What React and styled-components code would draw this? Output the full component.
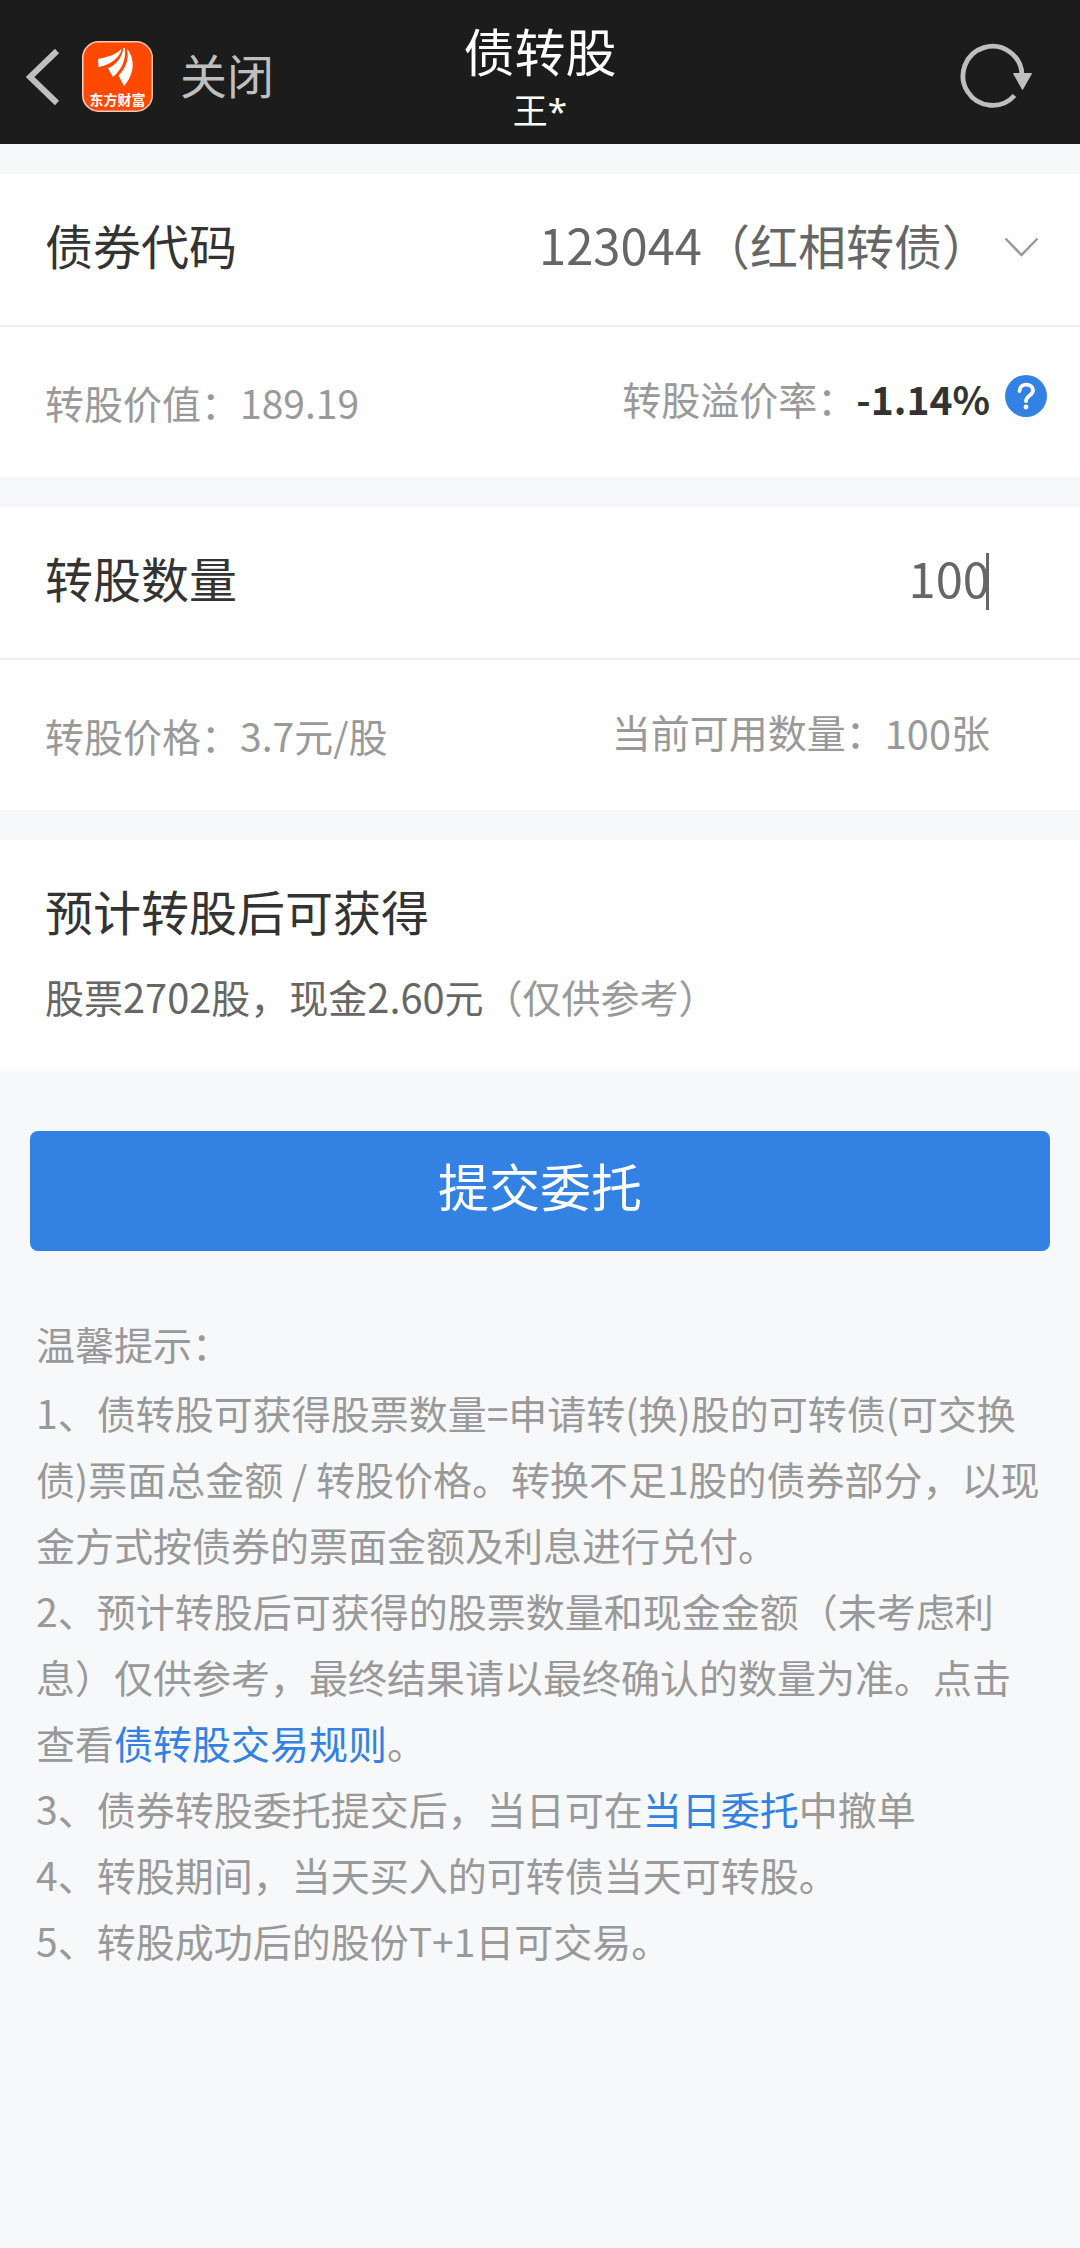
import React from 'react';
import styled, { createGlobalStyle } from 'styled-components';

const GlobalStyle = createGlobalStyle`
  * {
    box-sizing: border-box;
  }

  body {
    margin: 0;
    background: #f7f8fa;
    font-family: 'Noto Sans CJK SC', 'Noto Sans', sans-serif;
    color: #333;
  }
`;

const Page = styled.main`
  width: 1080px;
  min-height: 2248px;
  background: #f7f8fa;
`;

const Header = styled.header`
  display: grid;
  grid-template-columns: 1fr auto 1fr;
  height: 144px;
  padding: 0 48px;
  background: #1c1c1c;
  color: #bfbfbf;
`;

const HeaderLeft = styled.div`
  display: flex;
  align-items: center;
  margin-left: -22px;
  padding-top: 9px;
`;

const Logo = styled.svg`
  margin-left: 21px;
`;

const Close = styled.span`
  margin: -6px 0 0 27px;
  font-size: 47px;
  line-height: 60px;
`;

const HeaderTitle = styled.div`
  padding-top: 20px;
  text-align: center;
  color: #fff;
`;

const Title = styled.h1`
  margin: 0;
  font-size: 51px;
  font-weight: 400;
  line-height: 60px;
`;

const Account = styled.div`
  margin-top: 8px;
  font-family: 'Noto Sans', 'Noto Sans CJK SC', sans-serif;
  font-size: 35px;
  line-height: 46px;
`;

const Refresh = styled.svg`
  justify-self: end;
  margin-top: 41px;
`;

const Card = styled.section`
  margin-top: 30px;
  background: #fff;
`;

const Row = styled.div`
  display: flex;
  justify-content: space-between;
  height: ${({ $sub }) => ($sub ? 150 : 153)}px;
  padding: 0 30px 0 45px;
  border-bottom: ${({ $sub }) => ($sub ? 0 : 2)}px solid #eee;
  font-size: ${({ $sub }) => ($sub ? 39 : 48)}px;
  line-height: 140px;
  color: ${({ $sub }) => ($sub ? '#999' : '#333')};
  white-space: nowrap;
`;

const Side = styled.div`
  display: flex;
  line-height: ${({ $raised }) => ($raised ? 143 : 150)}px;
`;

const Value = styled.div`
  display: flex;
  color: #666;
`;

const Num = styled.span`
  font-size: 1.02em;
`;

const Rate = styled.b`
  color: #333;
`;

const Slot = styled.span`
  display: flex;
  justify-content: flex-end;
  width: 60px;
`;

const Caret = styled.i`
  width: 3px;
  height: 57px;
  margin: 46px 1px 0 -4px;
  background: #666;
`;

const Result = styled(Card)`
  height: 231px;
  padding: 38px 45px 0;
`;

const ResultTitle = styled.div`
  font-size: 48px;
  line-height: 64px;
`;

const ResultText = styled.div`
  margin-top: 25px;
  font-size: 39px;
  line-height: 58px;
  color: #666;
`;

const Muted = styled.span`
  color: #999;
`;

const Submit = styled.button`
  display: block;
  width: 1020px;
  height: 120px;
  margin: 60px 30px 0;
  padding: 0 0 12px;
  border: 0;
  border-radius: 8px;
  background: #3381e3;
  color: #fff;
  font-family: inherit;
  font-size: 51px;
`;

const Tips = styled.div`
  padding: 59px 0 0 36px;
  font-size: 39px;
  line-height: 66px;
  color: #999;
  white-space: nowrap;
`;

const TipsTitle = styled.div`
  margin-bottom: 3px;
`;

const Link = styled.a`
  color: #3381e3;
`;

const BackIcon = () =>
  <svg width="35" height="58" viewBox="0 0 35 58">
    <path d="M31 3L4 29L31 55" fill="none" stroke="#bfbfbf" strokeWidth="6" />
  </svg>
;

const LogoText = styled.text`
  font-family: 'Noto Sans CJK SC', sans-serif;
  font-size: 14px;
  font-weight: 700;
`;

const AppLogo = () =>
  <Logo width="71" height="71" viewBox="0 0 71 71">
    <rect x="0.8" y="0.8" width="69.4" height="69.4" rx="16" fill="#ff4800" stroke="#f5c9b8" strokeWidth="1.6" />
    <g fill="#fff">
      <path d="M16 18C25 16 34 14 40 7.5C38 16 29 24 16.5 26Z" />
      <path d="M41.5 7C40 16 35 23 26 27.5L31 36C40 28 44 19 43 7Z" />
      <path d="M45 7.5C47.5 19 43 28 36.5 34.5L42 45C52 34 54 19 45 7.5Z" />
      <LogoText x="7.5" y="63.5" textLength="56">东方财富</LogoText>
    </g>
  </Logo>
;

const RefreshIcon = () =>
  <Refresh width="72" height="70" viewBox="0 0 72 70">
    <path d="M54.5 54.5A29.5 29.5 0 1 1 62 34" fill="none" stroke="#bfbfbf" strokeWidth="4.8" />
    <path d="M53.5 32.5H71.5L62.5 48.5Z" fill="#bfbfbf" stroke="#bfbfbf" strokeLinejoin="round" />
  </Refresh>
;

const ArrowIcon = styled.svg`
  margin: 63px 11px 0 0;
`;

const HelpIcon = styled.svg`
  margin: 48px 3px 0 0;
`;

const App = () =>
  <Page>
    <GlobalStyle />
    <Header>
      <HeaderLeft>
        <BackIcon />
        <AppLogo />
        <Close>关闭</Close>
      </HeaderLeft>
      <HeaderTitle>
        <Title>债转股</Title>
        <Account>王*</Account>
      </HeaderTitle>
      <RefreshIcon />
    </Header>

    <Card>
      <Row>
        <span>债券代码</span>
        <Value>
          <span><Num>123044</Num>（红相转债）</span>
          <Slot>
            <ArrowIcon width="35" height="21" viewBox="0 0 35 21">
              <path d="M1.5 1.5L17.5 18L33.5 1.5" fill="none" stroke="#999" strokeWidth="2.5" />
            </ArrowIcon>
          </Slot>
        </Value>
      </Row>
      <Row $sub>
        <Side>转股价值：189.19</Side>
        <Side $raised>
          转股溢价率：<Rate>-1.14%</Rate>
          <Slot>
            <HelpIcon width="42" height="42" viewBox="0 0 42 42">
              <circle cx="21" cy="21" r="21" fill="#3381e3" />
              <path d="M14.5 16C14.5 7.5 28 7.5 28 15.5C28 20.5 21 20.5 21 26" fill="none" stroke="#fff" strokeWidth="3.8" strokeLinecap="round" />
              <circle cx="21" cy="32" r="2.4" fill="#fff" />
            </HelpIcon>
          </Slot>
        </Side>
      </Row>
    </Card>

    <Card>
      <Row>
        <span>转股数量</span>
        <Value>
          <Num>100</Num>
          <Caret />
          <Slot />
        </Value>
      </Row>
      <Row $sub>
        <Side>转股价格：3.7元/股</Side>
        <Side $raised>
          当前可用数量：<Num>100</Num>张
          <Slot />
        </Side>
      </Row>
    </Card>

    <Result>
      <ResultTitle>预计转股后可获得</ResultTitle>
      <ResultText>
        股票<Num>2702</Num>股，现金<Num>2.60</Num>元<Muted>（仅供参考）</Muted>
      </ResultText>
    </Result>

    <Submit>提交委托</Submit>

    <Tips>
      <TipsTitle>温馨提示：</TipsTitle>
      <div>1、债转股可获得股票数量=申请转(换)股的可转债(可交换</div>
      <div>债)票面总金额 / 转股价格。转换不足1股的债券部分，以现</div>
      <div>金方式按债券的票面金额及利息进行兑付。</div>
      <div>2、预计转股后可获得的股票数量和现金金额（未考虑利</div>
      <div>息）仅供参考，最终结果请以最终确认的数量为准。点击</div>
      <div>查看<Link>债转股交易规则</Link>。</div>
      <div>3、债券转股委托提交后，当日可在<Link>当日委托</Link>中撤单</div>
      <div>4、转股期间，当天买入的可转债当天可转股。</div>
      <div>5、转股成功后的股份T+1日可交易。</div>
    </Tips>
  </Page>
;

export default App;
